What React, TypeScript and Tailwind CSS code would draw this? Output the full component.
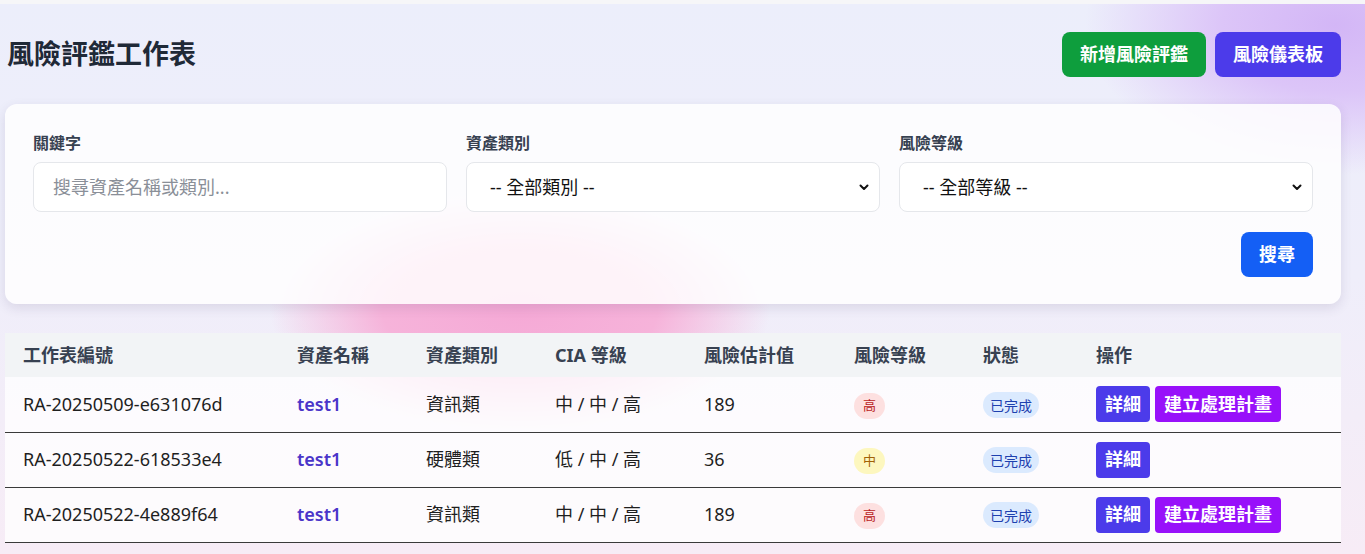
import React from "react";

const rows = [
  { id: "RA-20250509-e631076d", asset: "test1", type: "資訊類", cia: "中 / 中 / 高", score: "189", level: "高", plan: true },
  { id: "RA-20250522-618533e4", asset: "test1", type: "硬體類", cia: "低 / 中 / 高", score: "36", level: "中", plan: false },
  { id: "RA-20250522-4e889f64", asset: "test1", type: "資訊類", cia: "中 / 中 / 高", score: "189", level: "高", plan: true },
];

const Chevron = () => (
  <svg
    className="pointer-events-none absolute right-[10px] top-1/2 -translate-y-1/2"
    width="12"
    height="12"
    viewBox="0 0 12 12"
    fill="none"
  >
    <path d="M2.5 4.5 6 8l3.5-3.5" stroke="#111" strokeWidth="2" strokeLinecap="round" strokeLinejoin="round" />
  </svg>
);

const LevelBadge = ({ level }: { level: string }) =>
  level === "高" ? (
    <span className="inline-flex h-[26px] w-[31px] items-center justify-center rounded-full bg-[#fde0e0] text-[13px] text-[#b91c1c]">
      高
    </span>
  ) : (
    <span className="inline-flex h-[26px] w-[31px] items-center justify-center rounded-full bg-[#fdf7bf] text-[13px] text-[#a16207]">
      中
    </span>
  );

export default function App() {
  return (
    <div
      className="min-h-[554px] bg-[radial-gradient(ellipse_250px_120px_at_520px_310px,#f5a9d6_0%,#f6b3da_55%,transparent_100%),radial-gradient(ellipse_250px_150px_at_1335px_25px,#d3b6f6_0%,#dcc5f8_45%,transparent_100%),linear-gradient(180deg,#eceefb_0%,#efeefa_50%,#f7ecf6_100%)] pr-[24px] pl-[5px] text-[#1f1f1f]"
      style={{ fontFamily: '"Noto Sans", "Noto Sans CJK TC", sans-serif' }}
    >
      <div className="-ml-[5px] -mr-[24px] h-[4px] bg-[#f6f6f8]" />

      <div className="flex h-[100px] items-center justify-between">
        <h1 className="pl-[2px] text-[27px] font-bold text-[#1f2937]">風險評鑑工作表</h1>
        <div className="flex gap-[9px]">
          <button className="h-[45px] rounded-lg bg-[#0e9e3d] px-[18px] text-[18px] font-bold text-white">
            新增風險評鑑
          </button>
          <button className="h-[45px] rounded-lg bg-[#4c3bea] px-[18px] text-[18px] font-bold text-white">
            風險儀表板
          </button>
        </div>
      </div>

      <div className="rounded-xl bg-white/85 px-[28px] pt-[28px] pb-[27px] shadow-[0_4px_12px_rgba(60,40,90,0.12)]">
        <div className="grid grid-cols-3 gap-[19px]">
          <div>
            <label className="mb-[8px] block text-[16px] leading-[22px] font-semibold text-[#374151]">關鍵字</label>
            <input
              className="h-[50px] w-full rounded-lg border border-[#e5e7eb] bg-white px-[19px] text-[18px] outline-none placeholder:text-[#8a8f98]"
              placeholder="搜尋資產名稱或類別..."
            />
          </div>
          <div>
            <label className="mb-[8px] block text-[16px] leading-[22px] font-semibold text-[#374151]">資產類別</label>
            <div className="relative">
              <select className="h-[50px] w-full appearance-none rounded-lg border border-[#e5e7eb] bg-white px-[23px] text-[18px] text-[#111]">
                <option>-- 全部類別 --</option>
              </select>
              <Chevron />
            </div>
          </div>
          <div>
            <label className="mb-[8px] block text-[16px] leading-[22px] font-semibold text-[#374151]">風險等級</label>
            <div className="relative">
              <select className="h-[50px] w-full appearance-none rounded-lg border border-[#e5e7eb] bg-white px-[23px] text-[18px] text-[#111]">
                <option>-- 全部等級 --</option>
              </select>
              <Chevron />
            </div>
          </div>
        </div>
        <div className="mt-[20px] flex justify-end">
          <button className="h-[45px] rounded-lg bg-[#145ff5] px-[18px] text-[18px] font-bold text-white">搜尋</button>
        </div>
      </div>

      <table className="mt-[29px] w-full border-collapse text-left text-[18px]">
        <colgroup>
          <col className="w-[274px]" />
          <col className="w-[129px]" />
          <col className="w-[129px]" />
          <col className="w-[149px]" />
          <col className="w-[150px]" />
          <col className="w-[129px]" />
          <col className="w-[113px]" />
          <col />
        </colgroup>
        <thead>
          <tr className="h-[44px] bg-[#f2f4f6]">
            {["工作表編號", "資產名稱", "資產類別", "CIA 等級", "風險估計值", "風險等級", "狀態", "操作"].map((h) => (
              <th key={h} className="pl-[18px] font-bold text-[#374151]">
                {h}
              </th>
            ))}
          </tr>
        </thead>
        <tbody>
          {rows.map((r) => (
            <tr key={r.id} className="h-[55px] border-b border-[#3a3a3a] bg-white/80">
              <td className="pl-[18px]">{r.id}</td>
              <td className="pl-[18px] font-semibold text-[#4a35c9]">{r.asset}</td>
              <td className="pl-[18px]">{r.type}</td>
              <td className="pl-[18px]">{r.cia}</td>
              <td className="pl-[18px]">{r.score}</td>
              <td className="pl-[18px]">
                <LevelBadge level={r.level} />
              </td>
              <td className="pl-[18px]">
                <span className="inline-flex h-[26px] items-center rounded-full bg-[#dbeafe] px-[7px] text-[14px] text-[#1e40af]">
                  已完成
                </span>
              </td>
              <td className="pl-[18px]">
                <div className="flex gap-[5px]">
                  <button className="h-[36px] rounded bg-[#4c3bea] px-[9px] text-[18px] font-bold text-white">詳細</button>
                  {r.plan && (
                    <button className="h-[36px] rounded bg-[#9810fa] px-[9px] text-[18px] font-bold text-white">
                      建立處理計畫
                    </button>
                  )}
                </div>
              </td>
            </tr>
          ))}
        </tbody>
      </table>
    </div>
  );
}
